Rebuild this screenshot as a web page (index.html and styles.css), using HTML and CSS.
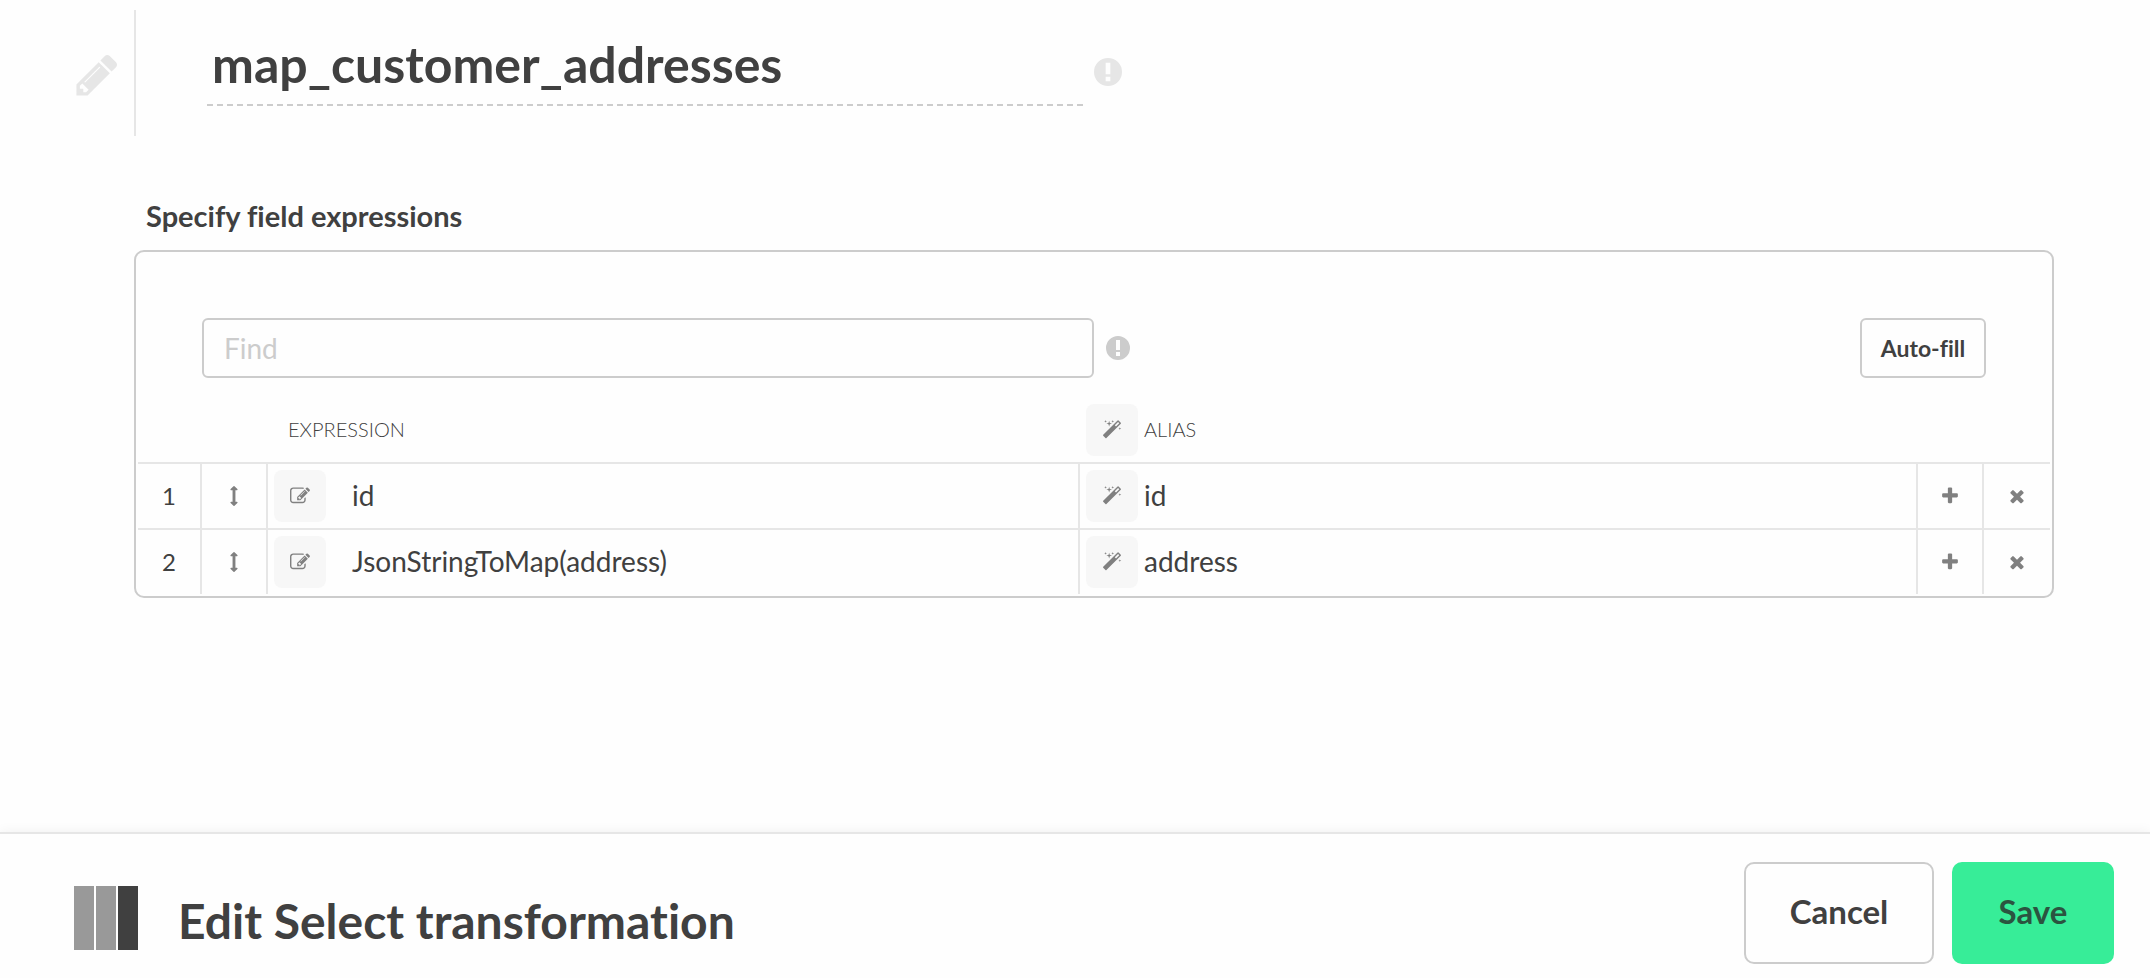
FILE: index.html
```html
<!DOCTYPE html>
<html lang="en">
<head>
    <meta charset="UTF-8">
    <meta name="viewport" content="width=device-width, initial-scale=1.0">
    <title>Edit Select transformation</title>
    <link rel="stylesheet" href="styles.css">
</head>
<body>
    <!-- Shared icons -->
    <svg class="sprite" aria-hidden="true">
        <symbol id="icon-pencil" viewBox="0 0 1792 1792"><path d="M491 1536l91-91-235-235-91 91v107h128v128h107zm523-928q0-22-22-22-10 0-17 7l-542 542q-7 7-7 17 0 22 22 22 10 0 17-7l542-542q7-7 7-17zm-54-192l416 416-832 832h-416v-416zm683 96q0 53-37 90l-166 166-416-416 166-165q36-38 90-38 53 0 91 38l235 234q37 39 37 91z"/></symbol>
        <symbol id="icon-info" viewBox="0 0 24 24"><path fill-rule="evenodd" d="M12 0a12 12 0 1 1 0 24a12 12 0 1 1 0-24zM10 4v10h4V4zM10 16v4h4v-4z"/></symbol>
        <symbol id="icon-edit" viewBox="0 0 1792 1792"><path d="M888 1184l116-116-152-152-116 116v56h96v96h56zm440-720q-16-16-33 1l-350 350q-17 17-1 33t33-1l350-350q17-17 1-33zm80 594v190q0 119-84.5 203.5t-203.5 84.5h-832q-119 0-203.5-84.5t-84.5-203.5v-832q0-119 84.5-203.5t203.5-84.5h832q63 0 117 25 15 7 18 23 3 17-9 29l-49 49q-14 14-32 8-23-6-45-6h-832q-66 0-113 47t-47 113v832q0 66 47 113t113 47h832q66 0 113-47t47-113v-126q0-13 9-22l64-64q15-15 35-7t20 29zm-96-738l288 288-672 672h-288v-288zm444 132l-92 92-288-288 92-92q28-28 68-28t68 28l152 152q28 28 28 68t-28 68z"/></symbol>
        <symbol id="icon-magic" viewBox="0 0 1792 1792"><path d="M1254 581l293-293-107-107-293 293zm447-293q0 27-18 45l-1286 1286q-18 18-45 18t-45-18l-198-198q-18-18-18-45t18-45l1286-1286q18-18 45-18t45 18l198 198q18 18 18 45zm-1351-190l98 30-98 30-30 98-30-98-98-30 98-30 30-98zm350 162l196 60-196 60-60 196-60-196-196-60 196-60 60-196zm930 478l98 30-98 30-30 98-30-98-98-30 98-30 30-98zm-640-640l98 30-98 30-30 98-30-98-98-30 98-30 30-98z"/></symbol>
        <symbol id="icon-move" viewBox="0 0 1792 1792"><path d="M1216 320q0 26-19 45t-45 19h-128v1024h128q26 0 45 19t19 45-19 45l-256 256q-19 19-45 19t-45-19l-256-256q-19-19-19-45t19-45 45-19h128v-1024h-128q-26 0-45-19t-19-45 19-45l256-256q19-19 45-19t45 19l256 256q19 19 19 45z"/></symbol>
        <symbol id="icon-plus" viewBox="0 0 1792 1792"><path d="M1600 736v192q0 40-28 68t-68 28h-416v416q0 40-28 68t-68 28h-192q-40 0-68-28t-28-68v-416h-416q-40 0-68-28t-28-68v-192q0-40 28-68t68-28h416v-416q0-40 28-68t68-28h192q40 0 68 28t28 68v416h416q40 0 68 28t28 68z"/></symbol>
        <symbol id="icon-times" viewBox="0 0 1792 1792"><path d="M1490 1322q0 40-28 68l-136 136q-28 28-68 28t-68-28l-294-294-294 294q-28 28-68 28t-68-28l-136-136q-28-28-28-68t28-68l294-294-294-294q-28-28-28-68t28-68l136-136q28-28 68-28t68 28l294 294 294-294q28-28 68-28t68 28l136 136q28 28 28 68t-28 68l-294 294 294 294q28 28 28 68z"/></symbol>
    </svg>

    <header class="name-bar">
        <div class="name-icon">
            <svg class="pencil"><use href="#icon-pencil"/></svg>
        </div>
        <div class="name-field">
            <input type="text" class="name-input" value="map_customer_addresses" aria-label="Component name" spellcheck="false">
            <svg class="info info-light"><use href="#icon-info"/></svg>
        </div>
    </header>

    <main>
        <h2>Specify field expressions</h2>
        <section class="panel">
            <div class="toolbar">
                <input type="text" class="find" placeholder="Find" aria-label="Find">
                <svg class="info"><use href="#icon-info"/></svg>
                <button type="button" class="autofill">Auto-fill</button>
            </div>
            <table>
                <colgroup>
                    <col class="col-num">
                    <col class="col-tool">
                    <col class="col-expression">
                    <col>
                    <col class="col-tool">
                    <col class="col-tool">
                </colgroup>
                <thead>
                    <tr>
                        <th></th>
                        <th></th>
                        <th class="expression-head"><span>EXPRESSION</span></th>
                        <th>
                            <div class="cell">
                                <button type="button" class="tile" aria-label="Fill all aliases"><svg class="icon"><use href="#icon-magic"/></svg></button>
                                <span>ALIAS</span>
                            </div>
                        </th>
                        <th></th>
                        <th></th>
                    </tr>
                </thead>
                <tbody>
                    <tr>
                        <td class="num">1</td>
                        <td><button type="button" class="tool" aria-label="Move"><svg class="icon"><use href="#icon-move"/></svg></button></td>
                        <td>
                            <div class="cell expression">
                                <button type="button" class="tile" aria-label="Edit expression"><svg class="icon"><use href="#icon-edit"/></svg></button>
                                <span>id</span>
                            </div>
                        </td>
                        <td>
                            <div class="cell">
                                <button type="button" class="tile" aria-label="Fill alias"><svg class="icon"><use href="#icon-magic"/></svg></button>
                                <span>id</span>
                            </div>
                        </td>
                        <td><button type="button" class="tool" aria-label="Add"><svg class="icon"><use href="#icon-plus"/></svg></button></td>
                        <td><button type="button" class="tool" aria-label="Remove"><svg class="icon"><use href="#icon-times"/></svg></button></td>
                    </tr>
                    <tr>
                        <td class="num">2</td>
                        <td><button type="button" class="tool" aria-label="Move"><svg class="icon"><use href="#icon-move"/></svg></button></td>
                        <td>
                            <div class="cell expression">
                                <button type="button" class="tile" aria-label="Edit expression"><svg class="icon"><use href="#icon-edit"/></svg></button>
                                <span>JsonStringToMap(address)</span>
                            </div>
                        </td>
                        <td>
                            <div class="cell">
                                <button type="button" class="tile" aria-label="Fill alias"><svg class="icon"><use href="#icon-magic"/></svg></button>
                                <span>address</span>
                            </div>
                        </td>
                        <td><button type="button" class="tool" aria-label="Add"><svg class="icon"><use href="#icon-plus"/></svg></button></td>
                        <td><button type="button" class="tool" aria-label="Remove"><svg class="icon"><use href="#icon-times"/></svg></button></td>
                    </tr>
                </tbody>
            </table>
        </section>
    </main>

    <footer>
        <div class="logo"><i></i><i></i><i></i></div>
        <h1>Edit Select transformation</h1>
        <div class="actions">
            <button type="button" class="btn">Cancel</button>
            <button type="submit" class="btn btn-save">Save</button>
        </div>
    </footer>
</body>
</html>
```
FILE: styles.css
```css
/* General Reset */
* {
    box-sizing: border-box;
    margin: 0;
    padding: 0;
    font-family: Lato, "Open Sans", sans-serif;
    font-variant-ligatures: none;
}

body {
    display: flex;
    flex-direction: column;
    min-height: 100vh;
    background-color: #fefefe;
    color: #404040;
}

button {
    background: none;
    border: none;
    color: #404040;
    cursor: pointer;
}

svg {
    display: block;
    flex: none;
    fill: currentColor;
}

.sprite {
    position: absolute;
    width: 0;
    height: 0;
}

/* Component name */
.name-bar {
    display: flex;
    padding: 10px 96px 0 0;
}

.name-icon {
    display: flex;
    align-items: center;
    width: 136px;
    height: 126px;
    padding: 4px 0 0 73px;
    border-right: 2px solid #e6e6e6;
    color: #e6e6e6;
}

.pencil {
    width: 48px;
    height: 48px;
}

.name-field {
    display: flex;
    align-items: center;
    flex: 1;
    gap: 11px;
    height: 96px;
    padding-left: 71px;
}

.name-input {
    width: 876px;
    height: 96px;
    padding: 22px 5px 8px;
    background: none;
    border: none;
    border-bottom: 2px dashed #ccc;
    outline: none;
    font-size: 50px;
    font-weight: 700;
    color: #404040;
}

.info {
    width: 24px;
    height: 24px;
    color: #ccc;
}

.info-light {
    width: 28px;
    height: 28px;
    margin-top: 28px;
    color: #e6e6e6;
}

/* Field expressions */
main {
    flex: 1;
    padding: 63px 96px 48px 134px;
}

h2 {
    padding: 0 12px;
    font-size: 29px;
    line-height: 34px;
}

.panel {
    margin-top: 17px;
    padding: 66px 2px 2px;
    border: 2px solid #ccc;
    border-radius: 10px;
}

.toolbar {
    display: flex;
    align-items: center;
    gap: 12px;
    padding: 0 64px 20px;
}

.find {
    width: 50%;
    height: 60px;
    padding: 0 20px;
    background: none;
    border: 2px solid #ccc;
    border-radius: 6px;
    outline: none;
    font-size: 28px;
    color: #404040;
}

.find::placeholder {
    color: #ccc;
}

.autofill {
    width: 126px;
    height: 60px;
    margin-left: auto;
    border: 2px solid #ccc;
    border-radius: 6px;
    font-size: 23px;
    font-weight: 700;
}

table {
    width: 100%;
    table-layout: fixed;
    border-collapse: separate;
    border-spacing: 0;
    font-size: 28px;
}

.col-num {
    width: 64px;
}

.col-tool {
    width: 66px;
}

.col-expression {
    width: 812px;
}

th {
    height: 64px;
    font-size: 20px;
    font-weight: 300;
    text-align: left;
}

.expression-head {
    padding: 0 0 2px 20px;
}

td {
    height: 66px;
    border-top: 2px solid #e6e6e6;
    border-right: 2px solid #e6e6e6;
}

td:last-child {
    border-right: none;
}

.num {
    padding-bottom: 2px;
    font-size: 24px;
    text-align: center;
}

.cell {
    display: flex;
    align-items: center;
    gap: 6px;
    padding-left: 6px;
}

.cell span {
    padding-bottom: 2px;
}

.expression {
    gap: 26px;
}

.tile {
    display: flex;
    align-items: center;
    justify-content: center;
    width: 52px;
    height: 52px;
    border-radius: 8px;
    background-color: #f7f7f7;
    color: #808080;
}

.tool {
    display: flex;
    align-items: center;
    justify-content: center;
    width: 100%;
    height: 64px;
    color: #808080;
}

.icon {
    width: 20px;
    height: 20px;
}

/* Bottom bar */
footer {
    display: flex;
    align-items: center;
    height: 146px;
    padding: 24px 36px 0 74px;
    border-top: 2px solid #e6e6e6;
    box-shadow: 0 0 12px rgba(0, 0, 0, 0.06);
    background-color: #fefefe;
}

.logo {
    display: flex;
    gap: 2px;
}

.logo i {
    width: 20px;
    height: 64px;
    background-color: #999;
}

.logo i:last-child {
    background-color: #404040;
}

h1 {
    margin: 4px 0 0 40px;
    font-size: 48px;
    font-weight: 700;
}

.actions {
    display: flex;
    gap: 18px;
    align-self: flex-start;
    margin: 4px 0 0 auto;
}

.btn {
    width: 190px;
    height: 102px;
    padding-bottom: 4px;
    border: 2px solid #ccc;
    border-radius: 10px;
    font-size: 33px;
    font-weight: 700;
}

.btn-save {
    width: 162px;
    border: none;
    background-color: #37ed98;
    color: #2b5440;
}
```
